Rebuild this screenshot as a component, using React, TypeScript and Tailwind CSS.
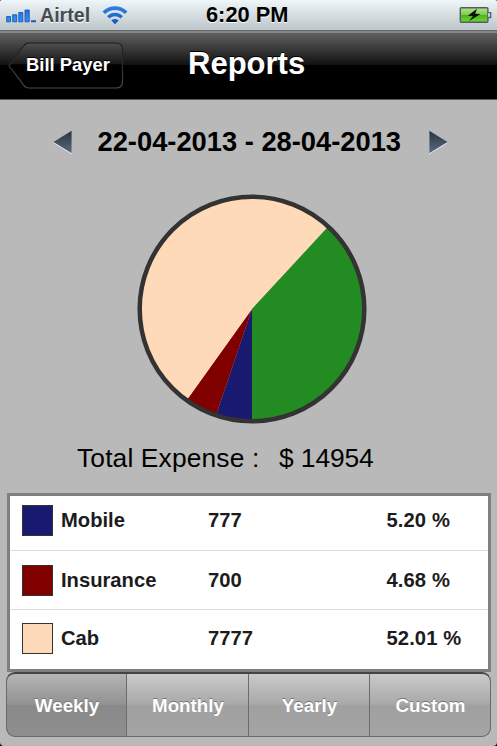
import { useState } from 'react';

import clsx from 'clsx';

const TABS = ['Weekly', 'Monthly', 'Yearly', 'Custom'];

const EXPENSES = [
	{ name: 'Mobile', amount: 777, percent: '5.20', color: '#191970' },
	{ name: 'Insurance', amount: 700, percent: '4.68', color: '#800000' },
	{ name: 'Cab', amount: 7777, percent: '52.01', color: '#ffdab9' },
];

const SLICES = [
	{ value: 777, color: '#191970' },
	{ value: 700, color: '#800000' },
	{ value: 7777, color: '#ffdab9' },
	{ value: 5700, color: '#228b22' },
];

const TOTAL = 14954;

// slices start at the bottom of the circle and go clockwise
function slicePath(from: number, to: number) {
	const point = (part: number) => {
		const angle = Math.PI / 2 + part * Math.PI * 2;
		return `${115 + 112 * Math.cos(angle)} ${115 + 112 * Math.sin(angle)}`;
	};
	return `M115 115L${point(from)}A112 112 0 ${to - from > 0.5 ? 1 : 0} 1 ${point(to)}Z`;
}

function StatusBar() {
	return (
		<div className="relative h-[30px] bg-linear-to-b from-[#eff6fa] to-[#bdc6ca] text-black">
			<div className="flex h-full items-center">
				<svg width="31" height="14" viewBox="0 0 31 14" className="ml-[6px] mt-[2px]">
					<defs>
						<linearGradient id="signal" x1="0" y1="0" x2="0" y2="1">
							<stop offset="0" stopColor="#2a6fd6" />
							<stop offset="1" stopColor="#2b97f7" />
						</linearGradient>
					</defs>
					<path
						d="M.7 7.500h3.800v5.300H.7zM6.700 5.800h4v7h-4zM12.800 3.500h4v9.300h-4zM19 1h4.200v11.800H19z"
						fill="url(#signal)"
						stroke="#1c55b8"
						strokeWidth=".9"
					/>
					<path d="M25 11.300h5v1.900h-5z" fill="#2458b4" />
				</svg>
				<span className="ml-[3px] mt-[2px] text-[19.600px] leading-none font-bold text-[#464b50] [text-shadow:0_1px_0_#fff]">
					Airtel
				</span>
				<svg width="26" height="20" viewBox="0 0 26 20" className="ml-[11.500px]">
					<defs>
						<linearGradient id="wifi" x1="0" y1="0" x2="0" y2="1">
							<stop offset="0" stopColor="#2e83e4" />
							<stop offset="1" stopColor="#1556bd" />
						</linearGradient>
					</defs>
					<path
						fill="url(#wifi)"
						d="M.5 6.6C7.4-.6 18.6-.6 25.5 6.6L22.8 9C17.4 3.6 8.6 3.6 3.2 9ZM5 11.2C9.6 6.7 16.4 6.7 21 11.2L18.4 13.5C15.3 10.5 10.7 10.5 7.6 13.5ZM9.3 15.5C11.4 13.5 14.6 13.5 16.7 15.5L13 19.2Z"
					/>
				</svg>
			</div>
			<span className="absolute top-0 left-[206px] text-[21.800px] leading-[30px] font-bold whitespace-nowrap [text-shadow:0_1px_0_#fff]">
				6:20 PM
			</span>
			<svg width="33" height="17" viewBox="0 0 33 17" className="absolute top-[7px] left-[459px]">
				<defs>
					<linearGradient id="battery" x1="0" y1="0" x2="0" y2="1">
						<stop offset="0" stopColor="#b0e884" />
						<stop offset=".48" stopColor="#7ecb50" />
						<stop offset=".52" stopColor="#4fb31c" />
						<stop offset="1" stopColor="#68da2e" />
					</linearGradient>
				</defs>
				<rect x="1.3" y=".8" width="27.6" height="14.4" rx="1" fill="url(#battery)" stroke="#555b66" strokeWidth="1.4" />
				<path d="M29.3 5.6h2.400v4.9h-2.400" fill="#d5dbe0" stroke="#555b66" strokeWidth="1.3" />
				<path d="M18 1.7L8.8 8.8 14 9 10.2 14 21.5 6.9 16.2 6.7Z" fill="#080d05" />
			</svg>
		</div>
	);
}

function NavBar() {
	return (
		<div className="relative h-[70px] border-t border-b border-t-[#66696a] border-b-[#5a5a5a] bg-[linear-gradient(#858585,#858585_2px,#606060_2px,#111_50%,#000_50%,#000)]">
			<button className="relative mt-[11px] ml-[8px] block h-[48px] w-[116px] text-left">
				<svg width="116" height="48" viewBox="0 0 116 48" className="absolute inset-0">
					<defs>
						<linearGradient id="back" x1="0" y1="0" x2="0" y2="1">
							<stop offset="0" stopColor="#505050" />
							<stop offset=".47" stopColor="#171717" />
							<stop offset=".48" stopColor="#000" />
							<stop offset="1" stopColor="#000" />
						</linearGradient>
						<linearGradient id="edge" x1="0" y1="0" x2="0" y2="1">
							<stop offset="0" stopColor="#1c1c1c" />
							<stop offset=".5" stopColor="#2c2c2c" />
							<stop offset="1" stopColor="#4a4a4a" />
						</linearGradient>
					</defs>
					<path
						d="M1 24C6 18 11 10 15.500 4Q17.500 1 21 1H108Q114.500 1 114.500 7.500V39.500Q114.500 46 108 46H21Q17.500 46 15.500 43C11 37 6 30 1 24Z"
						fill="url(#back)"
						stroke="url(#edge)"
						strokeWidth="1.200"
					/>
				</svg>
				<span className="relative -top-px ml-[18px] text-[18.400px] leading-[46px] font-bold whitespace-nowrap text-white [text-shadow:0_-1px_0_#000]">
					Bill Payer
				</span>
			</button>
			<h1 className="absolute top-px left-[188px] text-[31px] leading-[64px] font-bold text-white [text-shadow:0_-1px_0_#000]">
				Reports
			</h1>
		</div>
	);
}

function Arrow({ flip }: { flip?: boolean }) {
	return (
		<svg width="20" height="25" viewBox="0 0 20 25" className={clsx(flip && '-scale-x-100')}>
			<defs>
				<linearGradient id="arrow" x1="0" y1="0" x2="0" y2="1">
					<stop offset="0" stopColor="#29333f" />
					<stop offset="1" stopColor="#5a6b80" />
				</linearGradient>
			</defs>
			<path d="M.5 13L19 24.500V2" fill="#e4e8ec" />
			<path d="M.5 12L18.700 .8V23.200Z" fill="url(#arrow)" />
		</svg>
	);
}

function PieChart() {
	let sum = 0;

	return (
		<svg width="230" height="230" viewBox="0 0 230 230" className="ml-[136.500px]">
			{SLICES.map((slice) => {
				const from = sum / TOTAL;
				sum += slice.value;
				return <path key={slice.color} d={slicePath(from, sum / TOTAL)} fill={slice.color} />;
			})}
			<circle cx="115" cy="115" r="112.300" fill="none" stroke="#333" strokeWidth="4.500" />
		</svg>
	);
}

export default function App() {
	const [tab, setTab] = useState<string>('Weekly');

	return (
		<div className="w-[497px] bg-black">
			<div className="h-[746px] overflow-hidden rounded-t-[2px] rounded-b-[4px] bg-[#b9b9b9] font-['Liberation_Sans',Arial,sans-serif]">
				<StatusBar />
				<NavBar />

				<div className="mt-[29px] flex h-[26px] items-center">
					<button className="ml-[52.500px]">
						<Arrow />
					</button>
					<p className="ml-[25px] w-[305px] text-[27.300px] leading-[26px] font-bold whitespace-nowrap text-black">
						22-04-2013 - 28-04-2013
					</p>
					<button className="ml-[25px]">
						<Arrow flip />
					</button>
				</div>

				<div className="mt-[39px] h-[230px]">
					<PieChart />
				</div>

				<div className="mt-[18px] flex h-[32px] pl-[77px] text-[26.400px] leading-[32px] whitespace-nowrap text-black">
					<span className="w-[202px] tracking-[0.13px]">Total Expense :</span>
					<span className="tracking-[-0.1px]">$ {TOTAL}</span>
				</div>

				<div className="mt-[19px] ml-[7px] h-[179px] w-[484px] border-3 border-[#7f7f7f] bg-white">
					{EXPENSES.map((expense) => (
						<div
							key={expense.name}
							className="flex h-[59px] items-center border-b border-[#dedede] pl-[12px] text-[20.200px] font-bold text-[#1c1c1c] first:h-[55px] first:pb-[6px] last:h-[57px] last:border-b-0"
						>
							<span
								className="mr-[8px] size-[31px] border border-[#333]"
								style={{ backgroundColor: expense.color }}
							/>
							<span className="w-[147px]">{expense.name}</span>
							<span className="w-[178.500px]">{expense.amount}</span>
							<span className="tracking-[0.1px]">{expense.percent} %</span>
						</div>
					))}
				</div>

				<div className="ml-[6px] grid h-[65px] w-[485px] grid-cols-[120px_122px_121px_1fr] overflow-hidden rounded-[9px] border border-t-2 border-[#6a6a6a] border-t-[#444] bg-[#444]">
					{TABS.map((item) => (
						<button
							key={item}
							onClick={() => setTab(item)}
							className={clsx(
								'border-r border-[#6c6c6c] pt-[2px] pl-px text-[18.800px] font-bold text-white [text-shadow:0_-1px_0_#777] last:border-r-0',
								tab === item
									? 'bg-[linear-gradient(#b4b4b4,#929292_49%,#898989_51%,#8e8e8e)]'
									: 'bg-[linear-gradient(#cacaca,#a8a8a8_49%,#a0a0a0_51%,#a5a5a5)]'
							)}
						>
							{item}
						</button>
					))}
				</div>
			</div>
		</div>
	);
}
